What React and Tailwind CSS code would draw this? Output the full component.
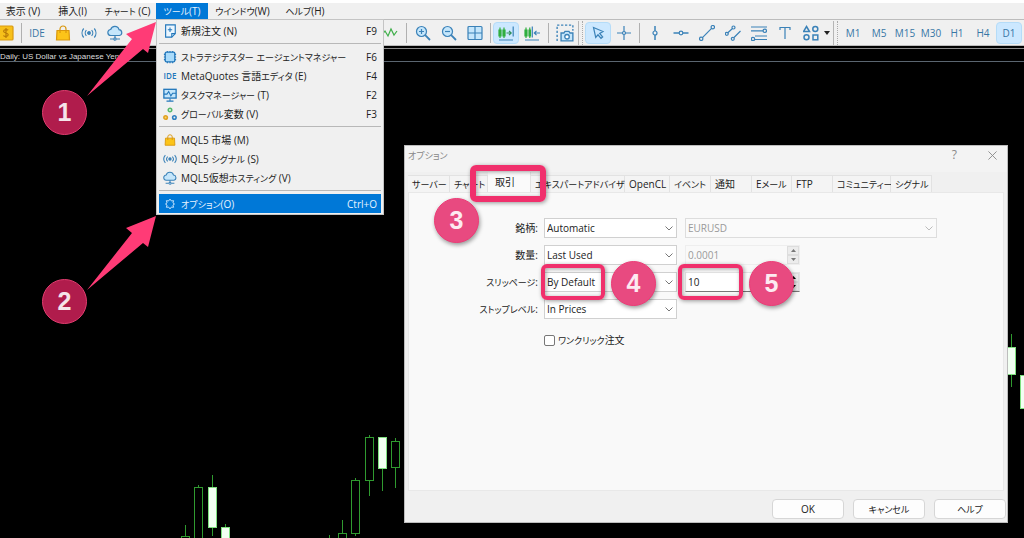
import React from "react";

const KANA = /([\u30A0-\u30FF]+)/;

/* Mixed-script label: kana sits a little smaller than the rest of the text. */
function Label({ children }) {
  return children.split(KANA).map((part, i) =>
    i % 2 ? (
      <span key={i} className="text-[9px] [font-feature-settings:'palt']">{part}</span>
    ) : (
      part
    )
  );
}

const B = "#3b82b8";

function Svg({ children, className = "size-4", ...rest }) {
  return (
    <svg viewBox="0 0 16 16" className={"shrink-0 " + className} fill="none" stroke={B} strokeWidth="1.2" aria-hidden="true" {...rest}>
      {children}
    </svg>
  );
}

const Dollar = () => (
  <Svg><rect x="0" y="1" width="15" height="14" rx="1" fill="#f7c01a" stroke="#d99a10" /><path d="M10.2 5.2C9.6 4.4 5.6 4 5.6 6.2s4.6 1.400 4.600 3.600-4 1.900-4.800.7M8 3v10" stroke="#b87a08" /></Svg>
);
const Bag = ({ className }) => (
  <Svg className={className}><path d="M2 5.500h12l.5 9.500h-13z" fill="#fcc419" stroke="#d9970f" /><path d="M5 8V4a3 3 0 0 1 6 0v4" stroke="#d9970f" /></Svg>
);
const Signal = ({ className }) => (
  <Svg className={className}><circle cx="8" cy="8" r="1.300" fill={B} /><path d="M5.400 5.200a4 4 0 0 0 0 5.600M10.600 5.200a4 4 0 0 1 0 5.600M2.700 3.500a7 7 0 0 0 0 9M13.300 3.500a7 7 0 0 1 0 9" /></Svg>
);
const Cloud = ({ className }) => (
  <Svg className={className}><path d="M4 10.500a3 3 0 0 1-.3-6A4.300 4.300 0 0 1 12 4.600a3 3 0 0 1 .5 5.900z" fill="#c5e6fb" /><path d="M8 10.500v3M3 14h3.500M9.500 14H13" /><circle cx="8" cy="14" r="1.200" fill="#fff" /></Svg>
);
const NewOrder = () => (
  <Svg className="size-3.5"><path d="M3 1h11v10l-4 4H3z" fill="#eaf6ff" stroke="#2277bb" strokeWidth="1.300" /><path d="M8 4v5M5.500 6.500h5M10 15v-4h4" stroke="#2277bb" /></Svg>
);
const Chip = () => (
  <Svg className="size-3.5"><path d="M5 1v14M8 1v14M11 1v14M1 5h14M1 8h14M1 11h14" stroke="#2277bb" /><rect x="2.500" y="2.500" width="11" height="11" rx="1.500" fill="#a9dbfb" stroke="#2277bb" strokeWidth="1.500" /></Svg>
);
const Task = () => (
  <Svg className="size-3.5"><rect x="1" y="1.500" width="14" height="10" fill="#c5e6fb" stroke="#2277bb" strokeWidth="1.500" /><path d="M1 7h3.500l2-3 2.500 5 2-3H15M8 12v3M4 15h8" stroke="#2277bb" /></Svg>
);
const Vars = () => (
  <Svg className="size-3.5" strokeWidth="1.800"><circle cx="8" cy="3.500" r="2" stroke="#55b96a" /><circle cx="3" cy="12" r="2" stroke="#e0a020" fill="#f9d36b" /><circle cx="13" cy="12" r="2" stroke="#2f7fc0" /></Svg>
);
const Gear = () => (
  <Svg className="size-3" stroke="#d8ecff"><path d="m8 1.500 1.800 2.400 3-.3-.9 2.900L14 8l-2.100 1.500.9 2.900-3-.3L8 14.500l-1.800-2.400-3 .3.9-2.900L2 8l2.100-1.500-.9-2.900 3 .3z" /></Svg>
);
const Wave = () => <Svg><path d="M0 10l3-4 3 5 3-7 3 6 3-4" stroke="#3fae4a" /></Svg>;
const Zoom = ({ plus }) => (
  <Svg><circle cx="6.500" cy="6.500" r="5" fill="#c5e6fb" /><path d="M10.200 10.200 15 15" strokeWidth="1.800" /><path d={plus ? "M4 6.500h5M6.500 4v5" : "M4 6.500h5"} /></Svg>
);
const Grid = () => <Svg><rect x="1" y="1.500" width="14" height="13" rx="1" fill="#c5e6fb" /><path d="M8 1.500v13M1 8h14" /></Svg>;
const Shift = () => (
  <Svg><path d="M1 5h2v6H1zM5 5h2v6H5zM2 2.500V13M6 2.500V13" stroke="#2fae3e" /><path d="M8.500 8H13M11 5.800 13.200 8 11 10.200" stroke="#2f8f5a" /><path d="M15.200 1.500v10M1 15h14" /></Svg>
);
const AutoScroll = () => (
  <Svg><path d="M1 5h2v6H1zM5 5h1.500v6H5zM2 2.500V13M5.800 2.500V13" stroke="#2fae3e" /><path d="M8.300 1.500v11M1 15h14" /><path d="M10.500 8H16M12.500 5.800 10.300 8l2.200 2.200" /></Svg>
);
const Camera = () => (
  <Svg className="size-[18px]"><path d="M1 15V1h14v5" strokeDasharray="2 1.500" /><path d="M4.500 8H7l1-1.500h3.500l1 1.500H15v7H4.500z" fill="#c5e6fb" /><circle cx="9.800" cy="11.300" r="2" fill="#fff" /></Svg>
);
const Cursor = () => <Svg><path d="M3.500 2.500 13 6.500 9.700 8.400l3 3.600-1.700 1.500-3-3.700-2.300 2.700z" /></Svg>;
const Cross = () => <Svg><path d="M8 1v5.500M8 9.500V15M1 8h5.500M9.500 8H15" /><circle cx="8" cy="8" r="1.500" /></Svg>;
const VLine = () => <Svg><path d="M8 1v5M8 10v5" strokeWidth="1.500" /><circle cx="8" cy="8" r="2" /></Svg>;
const HLine = () => <Svg><path d="M.5 8H6M10 8h5.500" strokeWidth="1.500" /><circle cx="8" cy="8" r="1.800" /></Svg>;
const Trend = () => <Svg><path d="M3.200 12.800 12.800 3.200" /><circle cx="2.200" cy="13.800" r="1.700" /><circle cx="13.800" cy="2.200" r="1.700" /></Svg>;
const Channel = () => <Svg><path d="m2.500 8 5-4.500M9 12.500 15.500 6" /><circle cx="1.800" cy="8.800" r="1.500" /><circle cx="8.500" cy="2.500" r="1.500" /><circle cx="7.800" cy="13.800" r="1.500" /></Svg>;
const Fibo = () => <Svg><path d="M0 2h16M0 5.800h12M4 11h12M4 14.500h12" /><circle cx="13.800" cy="5.800" r="1.700" /><circle cx="2" cy="14" r="1.700" /></Svg>;
const TextTool = () => <Svg><path d="M3 5V2.500h10V5M8 2.500V14" /></Svg>;
const Shapes = () => <Svg strokeWidth="1.500"><path d="M3.500 1.500 6.500 6.500h-6z" /><circle cx="12.300" cy="4" r="2.500" /><circle cx="3.500" cy="12.300" r="2.500" /><rect x="10" y="10" width="4.800" height="4.800" /></Svg>;

function Tool({ label, active, children }) {
  return (
    <button
      aria-label={label}
      className={"flex h-[22px] w-[26px] shrink-0 items-center justify-center rounded-sm text-[10px] font-medium text-[#3776a5] " + (active ? "border border-[#b5dcf8] bg-[#cce8ff]" : "")}
    >
      {children}
    </button>
  );
}

const Sep = ({ wide }) => (
  <span className={"flex shrink-0 justify-center " + (wide ? "w-[7px]" : "w-[5px]")}><span className="h-5 w-px bg-[#b0b0b0]" /></span>
);
const Grip = () => (
  <span className="flex w-[7px] shrink-0 justify-start gap-[3px]"><span className="h-6 w-px bg-[#b5b5b5]" /><span className="h-6 border-l border-dotted border-[#aaa]" /></span>
);

const MENU = [
  [{ icon: <NewOrder />, text: "新規注文 (N)", key: "F9" }],
  [
    { icon: <Chip />, text: "ストラテジテスター エージェントマネジャー", key: "F6" },
    { icon: <span className="text-[8px] font-semibold text-[#2277bb]">IDE</span>, text: "MetaQuotes 言語エディタ (E)", key: "F4" },
    { icon: <Task />, text: "タスクマネージャー (T)", key: "F2" },
    { icon: <Vars />, text: "グローバル変数 (V)", key: "F3" },
  ],
  [
    { icon: <Bag className="size-3" />, text: "MQL5 市場 (M)" },
    { icon: <Signal className="size-3.5" />, text: "MQL5 シグナル (S)" },
    { icon: <Cloud className="size-3.5" />, text: "MQL5仮想ホスティング (V)" },
  ],
  [{ icon: <Gear />, text: "オプション(O)", key: "Ctrl+O", active: true }],
];

function ToolsMenu() {
  return (
    <div role="menu" className="absolute top-[19px] left-[156px] z-10 w-[228px] divide-y divide-[#b8b8b8] border border-[#c4c4c4] bg-[#f0f0f0] px-0.5 text-[10px] text-[#222]">
      {MENU.map((group, i) => (
        <div key={i} className={i === 0 ? "pt-px pb-[3px]" : i === 3 ? "pt-[3px] pb-px" : "py-[3px]"}>
          {group.map((m) => (
            <button
              key={m.text}
              role="menuitem"
              className={"flex h-[19px] w-full items-center pr-1 whitespace-nowrap " + (m.active ? "bg-[#0078d7] text-[#e6f3ff]" : "")}
            >
              <span className="flex w-[22px] shrink-0 items-center justify-center">{m.icon}</span>
              <span className="flex-1 text-left"><Label>{m.text}</Label></span>
              <span>{m.key}</span>
            </button>
          ))}
        </div>
      ))}
    </div>
  );
}

const CANDLES = [
  { x: 181, top: 536, bottom: 545, high: 525, low: 545 },
  { x: 194, top: 487, bottom: 545, high: 485, low: 545 },
  { x: 208, top: 487, bottom: 527, high: 475, low: 536, full: true },
  { x: 221, top: 527, bottom: 545, high: 524, low: 545, full: true },
  { x: 325, top: 541, bottom: 545, high: 535, low: 545 },
  { x: 338, top: 533, bottom: 545, high: 520, low: 545 },
  { x: 351, top: 480, bottom: 533, high: 478, low: 536 },
  { x: 365, top: 437, bottom: 480, high: 435, low: 496 },
  { x: 378, top: 437, bottom: 468, high: 437, low: 491, full: true },
  { x: 391, top: 441, bottom: 467, high: 438, low: 488 },
  { x: 1007, top: 347, bottom: 374, high: 334, low: 387, full: true },
  { x: 1020, top: 375, bottom: 408, high: 375, low: 408, full: true },
];

function Chart() {
  return (
    <svg className="absolute top-0 left-0" width="1024" height="538" viewBox="0 0 1024 538" aria-hidden="true">
      {CANDLES.map((c) => (
        <g key={c.x} stroke="#2f9a2f">
          <path d={`M${c.x + 4.5} ${c.high}V${c.top}M${c.x + 4.5} ${c.bottom}V${c.low}`} />
          <rect x={c.x + 0.5} y={c.top + 0.5} width="8" height={c.bottom - c.top} fill={c.full ? "#f2fff2" : "#000"} stroke={c.full ? "#7fe07f" : "#2f9a2f"} />
        </g>
      ))}
    </svg>
  );
}

const Chevron = ({ className }) => (
  <svg viewBox="0 0 8 5" className={"pointer-events-none absolute right-1 h-[5px] w-2 " + className} fill="none" stroke="currentColor" aria-hidden="true"><path d="m.5.5 3.500 3.500L7.500.5" /></svg>
);

function Select({ id, value, disabled, label }) {
  return (
    <span className={"relative flex items-center " + (disabled ? "w-[252px]" : "w-[133px]")}>
      <select
        id={id}
        aria-label={label}
        disabled={disabled}
        className={"h-5 w-full appearance-none border px-0.5 text-[10px] leading-4 " + (disabled ? "border-[#ddd] bg-[#fafafa] text-[#999] opacity-100" : "border-[#d0d0d0] bg-white text-[#222]")}
      >
        <option>{value}</option>
      </select>
      <Chevron className={disabled ? "text-[#bbb]" : "text-[#777]"} />
    </span>
  );
}

function Spinner({ value, disabled, label }) {
  return (
    <span className={"flex h-5 w-[115px] border " + (disabled ? "border-[#eee] text-[#999]" : "border-[#e4e4e4] border-b-[#777] bg-white text-[#222]")}>
      <input aria-label={label} defaultValue={value} disabled={disabled} className="min-w-0 flex-1 px-0.5 text-[10px] leading-4 outline-none" />
      <span className={"flex w-3 flex-col bg-[#ececec] " + (disabled ? "text-[#777]" : "text-black")}>
        {["M0 3 2.500 0 5 3z", "M0 0 2.500 3 5 0z"].map((d, i) => (
          <button key={d} aria-label={i ? "減らす" : "増やす"} disabled={disabled} className="flex flex-1 items-center justify-center border border-[#ddd]">
            <svg viewBox="0 0 5 3" className="h-[3px] w-[5px]" fill="currentColor"><path d={d} /></svg>
          </button>
        ))}
      </span>
    </span>
  );
}

const ROWS = [
  { id: "symbol", label: "銘柄:", value: "Automatic", extra: <Select value="EURUSD" disabled label="シンボル" /> },
  { id: "volume", label: "数量:", value: "Last Used", extra: <Spinner value="0.0001" disabled label="数量の値" /> },
  { id: "slip", label: "スリッページ:", value: "By Default", extra: <Spinner value="10" label="スリッページの値" /> },
  { id: "stop", label: "ストップレベル:", value: "In Prices" },
];

const TABS = [
  { text: "サーバー", w: "w-[42px]" },
  { text: "チャート", w: "w-[38px]" },
  { text: "取引", w: "w-[43px]", active: true },
  { text: "エキスパートアドバイザ", w: "w-[94px]" },
  { text: "OpenCL", w: "w-[45px]" },
  { text: "イベント", w: "w-[41px]" },
  { text: "通知", w: "w-[41px]" },
  { text: "Eメール", w: "w-[40px]" },
  { text: "FTP", w: "w-[41px]" },
  { text: "コミュニティー", w: "w-[58px]" },
  { text: "シグナル", w: "w-[41px]" },
];

function OptionsDialog() {
  return (
    <section role="dialog" aria-label="オプション" className="absolute top-[145px] left-[404px] flex h-[378px] w-[604px] flex-col border border-[#bdbdbd] bg-[#f0f0f0] text-[10px] text-[#222]">
      <header className="flex h-[18px] shrink-0 items-center bg-[#f3f3f3] pr-2.5 pl-[3px] text-[#888]">
        <h1 className="flex-1"><Label>オプション</Label></h1>
        <button aria-label="?" className="mr-[31px] text-xs">?</button>
        <button aria-label="閉じる"><svg viewBox="0 0 10 10" className="size-[9px]" stroke="#888" aria-hidden="true"><path d="m.5.5 9 9M9.500.5l-9 9" /></svg></button>
      </header>
      <div className="h-2 shrink-0 bg-[#f3f3f3]" />
      <div role="tablist" className="flex h-5 shrink-0 items-end pl-[3px]">
        {TABS.map((t) => (
          <button
            key={t.text}
            role="tab"
            aria-selected={!!t.active}
            className={"flex shrink-0 items-center border-r border-[#e2e2e2] whitespace-nowrap " + t.w + (t.active ? " h-5 bg-[#fafafa] pl-[7px]" : " h-[17px] border-t bg-[#f4f4f4] pl-1")}
          >
            <span><Label>{t.text}</Label></span>
          </button>
        ))}
      </div>
      <div role="tabpanel" className="mr-[3px] ml-[3px] flex flex-1 flex-col gap-[7px] border border-[#e8e8e8] bg-[#f9f9f9] pt-[25px]">
        {ROWS.map((r) => (
          <div key={r.id} className="flex h-5 items-center">
            <label htmlFor={r.id} className="mr-1.5 w-[129px] text-right"><Label>{r.label}</Label></label>
            <Select id={r.id} value={r.value} />
            <span className="ml-2">{r.extra}</span>
          </div>
        ))}
        <label className="mt-1 ml-[135px] flex h-5 items-center gap-[3px]">
          <input type="checkbox" className="size-[11px] appearance-none rounded-xs border border-[#777] bg-white" />
          <span><Label>ワンクリック注文</Label></span>
        </label>
      </div>
      <footer className="flex h-[31px] shrink-0 items-center justify-end gap-[9px] pt-1 pr-px">
        {["OK", "キャンセル", "ヘルプ"].map((b) => (
          <button key={b} className="h-5 w-[72px] rounded-sm border border-[#d6d6d6] bg-[#fdfdfd]"><Label>{b}</Label></button>
        ))}
      </footer>
    </section>
  );
}

function Badge({ n, place, dark }) {
  return (
    <span className={"absolute z-20 flex size-[45px] items-center justify-center rounded-full border font-['Liberation_Sans'] text-[25px] font-bold " + place + (dark ? " border-[#e23d70] bg-[#b01c4c] text-[#f5e4ea]" : " border-[#ee3a76] bg-[#e84a80] text-[#fdeaf1] shadow-[1px_2px_4px_#0006]")}>
      {n}
    </span>
  );
}

const Frame = ({ place }) => (
  <span className={"pointer-events-none absolute z-20 rounded-md border-[#f0306c] shadow-[1px_1px_4px_#0006,inset_1px_1px_4px_#0005] " + place} />
);

const ARROW = "M70 0 62 31 57 27 1 74 46 17 40 12z";

export default function App() {
  return (
    <main className="relative min-h-screen overflow-hidden bg-black font-['Open_Sans','Noto_Sans_CJK_JP',sans-serif] leading-none">
      <Chart />
      <div className="relative border-t-[3px] border-white bg-[#f0f0f0]">
        <nav className="flex h-4 items-center text-[10px] text-[#222]">
          {[
            ["表示 (V)", "w-[46px]"],
            ["挿入(I)", "w-[53px]"],
            ["チャート (C)", "w-[57px]"],
            ["ツール(T)", "w-[52px] bg-[#0078d7] text-[#e6f3ff]"],
            ["ウインドウ(W)", "w-[69px]"],
            ["ヘルプ(H)", "w-[56px]"],
          ].map(([t, c]) => (
            <button key={t} className={"h-full whitespace-nowrap " + c}><Label>{t}</Label></button>
          ))}
        </nav>
        <div className="flex h-[27px] items-center border-t border-b border-[#bcbcbc]">
          <button aria-label="取引" className="flex w-[19px] shrink-0 justify-end pr-[5px]"><Dollar /></button>
          <Sep />
          <Tool label="IDE">IDE</Tool>
          <Tool label="市場"><Bag /></Tool>
          <Tool label="シグナル"><Signal /></Tool>
          <Tool label="ホスティング"><Cloud /></Tool>
          <span className="w-[249px] shrink-0" />
          <Tool label="ライン"><Wave /></Tool>
          <Sep wide />
          <Tool label="拡大"><Zoom plus /></Tool>
          <Tool label="縮小"><Zoom /></Tool>
          <Tool label="整列"><Grid /></Tool>
          <Sep />
          <Tool label="シフト" active><Shift /></Tool>
          <Tool label="自動スクロール"><AutoScroll /></Tool>
          <Sep wide />
          <Tool label="撮影"><Camera /></Tool>
          <Grip />
          <Tool label="カーソル" active><Cursor /></Tool>
          <Tool label="十字"><Cross /></Tool>
          <Sep />
          <Tool label="垂直線"><VLine /></Tool>
          <Tool label="水平線"><HLine /></Tool>
          <Tool label="トレンド"><Trend /></Tool>
          <Tool label="チャネル"><Channel /></Tool>
          <Tool label="フィボナッチ"><Fibo /></Tool>
          <Tool label="テキスト"><TextTool /></Tool>
          <Tool label="図形"><Shapes /></Tool>
          <svg viewBox="0 0 6 4" className="mr-[3px] h-1 w-1.5 shrink-0" aria-hidden="true"><path d="M0 0h6L3 4z" fill="#222" /></svg>
          <Grip />
          {["M1", "M5", "M15", "M30", "H1", "H4", "D1"].map((t) => (
            <Tool key={t} label={t} active={t === "D1"}>{t}</Tool>
          ))}
        </div>
      </div>
      <div className="relative mt-0.5 h-[14px] border-t border-b border-t-[#8a8a8a] border-b-[#5b6670] pt-1">
        <p className="font-['Liberation_Sans'] text-[8px] whitespace-nowrap text-[#ddd]">Daily: US Dollar vs Japanese Yen</p>
      </div>
      <ToolsMenu />
      <OptionsDialog />
      <svg viewBox="0 0 72 76" className="absolute top-[22px] left-[86px] z-20 h-[76px] w-[72px]" aria-hidden="true"><path d={ARROW} fill="#ff3b76" /></svg>
      <svg viewBox="0 0 72 76" className="absolute top-[216px] left-[86px] z-20 h-[76px] w-[72px]" aria-hidden="true"><path d={ARROW} fill="#ff3b76" /></svg>
      <Badge n="1" dark place="top-[90px] left-[42px]" />
      <Badge n="2" dark place="top-[279px] left-[42px]" />
      <Badge n="3" place="top-[198px] left-[434px]" />
      <Badge n="4" place="top-[261px] left-[611px]" />
      <Badge n="5" place="top-[261px] left-[749px]" />
      <Frame place="top-[165px] left-[470px] h-[37px] w-[76px] border-[6px]" />
      <Frame place="top-[264px] left-[541px] h-[36px] w-[64px] border-4" />
      <Frame place="top-[264px] left-[678px] h-[36px] w-[65px] border-4" />
    </main>
  );
}
